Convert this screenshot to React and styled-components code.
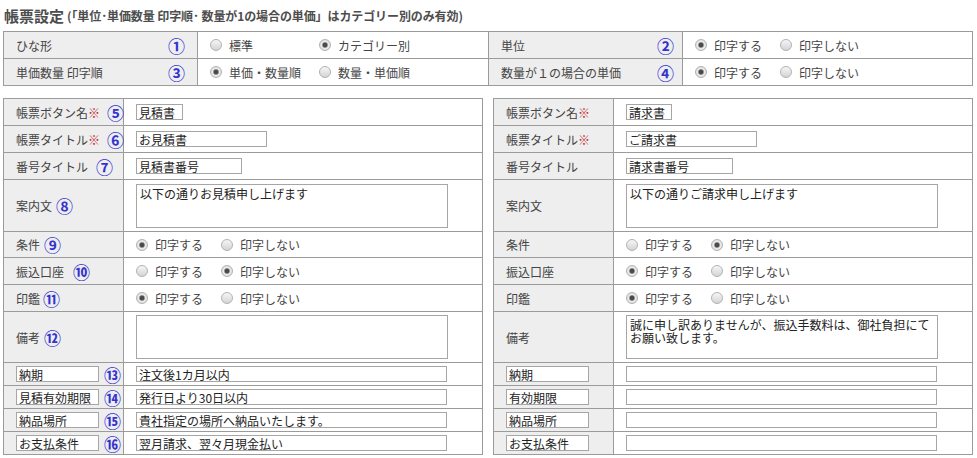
import styled, { createGlobalStyle } from 'styled-components'

const GlobalStyle = createGlobalStyle`
  body {
    margin: 0;
    background: #fff;
    font-family: "Noto Sans CJK JP", "Noto Sans", sans-serif;
    font-size: 12px;
    color: #444;
  }
`

const LINE = '#9b9b9b'

const Page = styled.div`
  width: 977px;
`

const Title = styled.h2`
  margin: 0;
  height: 31px;
  padding-left: 4px;
  display: flex;
  align-items: center;
  font-size: 15px;
  font-weight: bold;
  color: #4d4d4d;
  white-space: nowrap;

  small {
    font-size: 12px;
    margin-left: 3px;
    letter-spacing: -0.1px;
  }
`

const TopTable = styled.div`
  margin: 0 3px;
  width: 970px;
  box-sizing: border-box;
  border: 1px solid ${LINE};
  border-bottom: none;
`

const TopRow = styled.div`
  display: grid;
  grid-template-columns: 194px 291px 194px 1fr;
  height: 27px;
  box-sizing: border-box;
  border-bottom: 1px solid ${LINE};
`

const Head = styled.div`
  background: #eee;
  border-right: 1px solid ${LINE};
  display: flex;
  align-items: center;
  justify-content: ${({ $spread }) => ($spread ? 'space-between' : 'flex-start')};
  padding: 0 ${({ $pr }) => $pr ?? 0}px 0 12px;
  white-space: nowrap;
  color: #444;
`

const Cell = styled.div`
  display: flex;
  align-items: center;
  padding-left: 12px;
  border-right: 1px solid ${LINE};
  white-space: nowrap;

  &:last-child {
    border-right: none;
  }
`

const Split = styled.div`
  display: flex;
  gap: 10px;
  margin: 12px 3px 0;
`

const FormTable = styled.div`
  width: 480px;
  box-sizing: border-box;
  border: 1px solid ${LINE};
  border-bottom: none;
`

const Row = styled.div`
  display: grid;
  grid-template-columns: 120px 1fr;
  height: ${({ $h }) => $h}px;
  box-sizing: border-box;
  border-bottom: 1px solid ${LINE};
`

const Num = styled.span`
  color: #3333cf;
  font-size: 17px;
  font-weight: bold;
  line-height: 1;
  margin-left: ${({ $ml }) => $ml ?? 0}px;
`

const Req = styled.span`
  color: #c0282a;
  font-weight: bold;
`

const Option = styled.label`
  display: inline-flex;
  align-items: center;
  gap: 7px;
  width: ${({ $w }) => $w}px;
  color: #444;
`

const Radio = styled.span`
  flex: none;
  width: 12px;
  height: 12px;
  border-radius: 50%;
  box-sizing: border-box;
  border: 1px solid #b2b2b2;
  background: ${({ $on }) =>
    $on
      ? 'radial-gradient(circle, #4a4a4a 0 2px, #9a9a9a 2.6px, #ebebeb 3.4px, #d2d2d2 100%)'
      : 'linear-gradient(#f6f6f6, #d4d4d4)'};
`

const TextBox = styled.input`
  width: ${({ $w }) => $w}px;
  height: 16px;
  box-sizing: border-box;
  margin: 0;
  border: 1px solid #a6a6a6;
  padding: 0 2px;
  font: 12px "Noto Sans CJK JP", sans-serif;
  color: #222;
  background: #fff;
  outline: none;
`

const Memo = styled.textarea`
  width: ${({ $w }) => $w}px;
  height: 44px;
  box-sizing: border-box;
  margin: 0;
  border: 1px solid #a6a6a6;
  padding: 2px 3px;
  font: 12px/13px "Noto Sans CJK JP", sans-serif;
  color: #222;
  resize: none;
  overflow: hidden;
  outline: none;
`

const Choice = ({ options, on, w }) => (
  <>
    {options.map((o, i) => (
      <Option key={o} $w={w}>
        <Radio $on={i === on} />
        {o}
      </Option>
    ))}
  </>
)

const PRINT = ['印字する', '印字しない']

const left = [
  { h: 27, label: '帳票ボタン名', req: true, num: '⑤', ml: 7, input: '見積書', w: 47 },
  { h: 27, label: '帳票タイトル', req: true, num: '⑥', ml: 7, input: 'お見積書', w: 131 },
  { h: 27, label: '番号タイトル', num: '⑦', ml: 8, input: '見積書番号', w: 106 },
  { h: 52, label: '案内文', num: '⑧', ml: 4, memo: '以下の通りお見積申し上げます' },
  { h: 26, label: '条件', num: '⑨', ml: 4, on: 0 },
  { h: 27, label: '振込口座', num: '⑩', ml: 9, on: 1 },
  { h: 27, label: '印鑑', num: '⑪', ml: 3, on: 0 },
  { h: 51, label: '備考', num: '⑫', ml: 4, memo: '' },
  { h: 23, box: '納期', num: '⑬', input: '注文後1カ月以内', w: 311 },
  { h: 23, box: '見積有効期限', num: '⑭', input: '発行日より30日以内', w: 311 },
  { h: 23, box: '納品場所', num: '⑮', input: '貴社指定の場所へ納品いたします。', w: 311 },
  { h: 23, box: 'お支払条件', num: '⑯', input: '翌月請求、翌々月現金払い', w: 311 },
]

const right = [
  { h: 27, label: '帳票ボタン名', req: true, input: '請求書', w: 46 },
  { h: 27, label: '帳票タイトル', req: true, input: 'ご請求書', w: 131 },
  { h: 27, label: '番号タイトル', input: '請求書番号', w: 107 },
  { h: 52, label: '案内文', memo: '以下の通りご請求申し上げます' },
  { h: 26, label: '条件', on: 1 },
  { h: 27, label: '振込口座', on: 0 },
  { h: 27, label: '印鑑', on: 0 },
  { h: 51, label: '備考', memo: '誠に申し訳ありませんが、振込手数料は、御社負担にてお願い致します。' },
  { h: 23, box: '納期', input: '', w: 311 },
  { h: 23, box: '有効期限', input: '', w: 311 },
  { h: 23, box: '納品場所', input: '', w: 311 },
  { h: 23, box: 'お支払条件', input: '', w: 311 },
]

const Field = ({ f }) => (
  <Row $h={f.h}>
    <Head>
      {f.box != null ? <TextBox $w={83} defaultValue={f.box} /> : f.label}
      {f.req && <Req>※</Req>}
      {f.num && <Num $ml={f.ml ?? 5}>{f.num}</Num>}
    </Head>
    <Cell>
      {f.input != null && <TextBox $w={f.w} defaultValue={f.input} />}
      {f.memo != null && <Memo $w={312} defaultValue={f.memo} />}
      {f.on != null && <Choice options={PRINT} on={f.on} w={85} />}
    </Cell>
  </Row>
)

export default function App() {
  return (
    <Page>
      <GlobalStyle />
      <Title>
        帳票設定
        <small>(「単位･単価数量 印字順･ 数量が1の場合の単価」はカテゴリー別のみ有効)</small>
      </Title>

      <TopTable>
        <TopRow>
          <Head $spread $pr={12}>
            ひな形<Num>①</Num>
          </Head>
          <Cell>
            <Choice options={['標準', 'カテゴリー別']} on={1} w={109} />
          </Cell>
          <Head $spread $pr={8}>
            単位<Num>②</Num>
          </Head>
          <Cell>
            <Choice options={PRINT} on={0} w={85} />
          </Cell>
        </TopRow>
        <TopRow>
          <Head $spread $pr={12}>
            単価数量 印字順<Num>③</Num>
          </Head>
          <Cell>
            <Choice options={['単価・数量順', '数量・単価順']} on={0} w={109} />
          </Cell>
          <Head $spread $pr={8}>
            数量が１の場合の単価<Num>④</Num>
          </Head>
          <Cell>
            <Choice options={PRINT} on={0} w={85} />
          </Cell>
        </TopRow>
      </TopTable>

      <Split>
        <FormTable>
          {left.map((f, i) => (
            <Field key={i} f={f} />
          ))}
        </FormTable>
        <FormTable>
          {right.map((f, i) => (
            <Field key={i} f={f} />
          ))}
        </FormTable>
      </Split>
    </Page>
  )
}
